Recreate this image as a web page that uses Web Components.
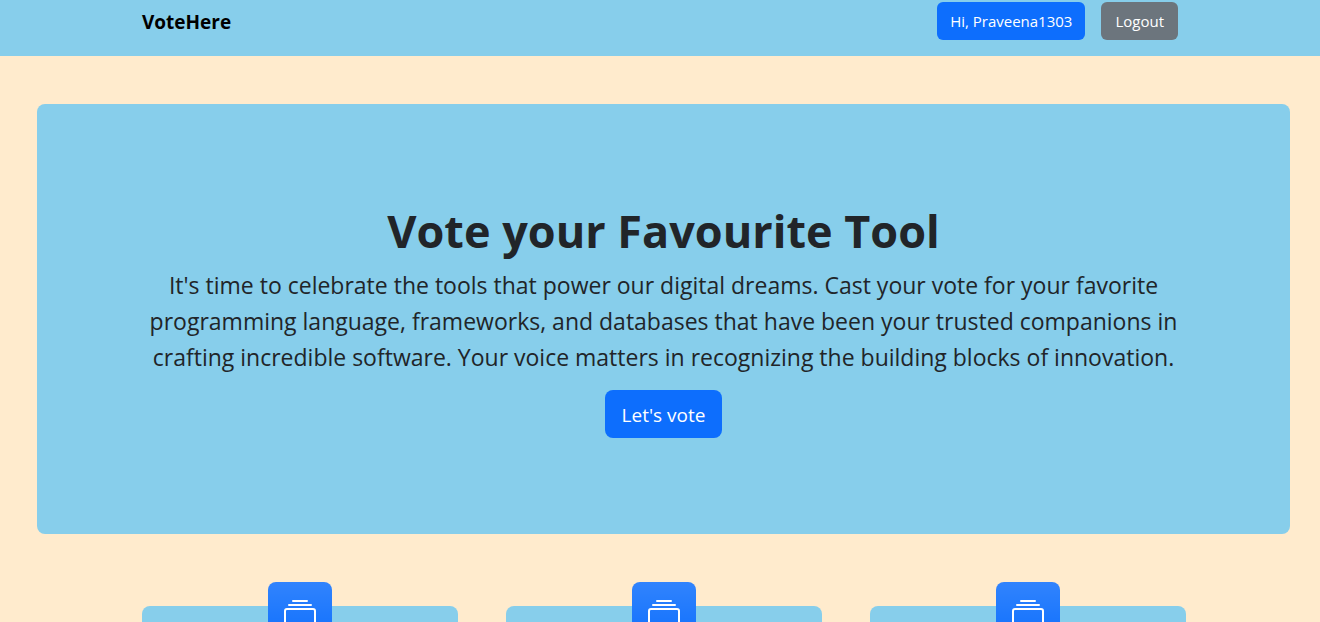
<!DOCTYPE html>
<html lang="en">
<head>
<meta charset="utf-8">
<meta name="viewport" content="width=device-width, initial-scale=1">
<title>VoteHere</title>
<style>
  body {
    margin: 0; background: #ffebcd; color: #212529;
    font-family: "Segoe UI", "Open Sans", "Noto Sans", sans-serif; font-size: 16px; line-height: 24px;
  }
</style>
</head>
<body>
<vote-page></vote-page>

<template id="page-template">
  <style>
    :host { display: flex; flex-direction: column; height: 100vh; overflow: hidden; }
    vote-nav { flex: none; }
    main { flex: 1; min-height: 0; display: flex; flex-direction: column; }
    vote-hero { flex: none; }
    .scroller { flex: 1; min-height: 0; margin-top: 48px; overflow: hidden; }
    .cards {
      display: grid; grid-template-columns: repeat(3, 1fr); gap: 48px;
      max-width: 1044px; margin: 0 auto; padding: 24px 48px 0 56px;
    }
  </style>
  <vote-nav user="Praveena1303"><span>VoteHere</span></vote-nav>
  <main>
    <vote-hero>
      <span slot="title">Vote your Favourite Tool</span>
      It's time to celebrate the tools that power our digital dreams. Cast your vote for your favorite programming language, frameworks, and databases that have been your trusted companions in crafting incredible software. Your voice matters in recognizing the building blocks of innovation.
      <span slot="action">Let's vote</span>
    </vote-hero>
    <section class="scroller">
      <div class="cards">
        <feature-card></feature-card>
        <feature-card></feature-card>
        <feature-card></feature-card>
      </div>
    </section>
  </main>
</template>

<template id="nav-template">
  <style>
    :host { display: block; background: #87ceeb; }
    nav {
      display: flex; align-items: flex-start; justify-content: space-between;
      max-width: 1036px; margin: 0 auto; padding: 2px 56px 14px;
    }
    a { color: #000; text-decoration: none; font-size: 19px; font-weight: 700; line-height: 40px; }
    .actions { display: flex; gap: 16px; }
  </style>
  <nav>
    <a href="#"><slot></slot></a>
    <div class="actions">
      <vote-button><span id="user"></span></vote-button>
      <vote-button kind="secondary">Logout</vote-button>
    </div>
  </nav>
</template>

<template id="button-template">
  <style>
    :host { display: inline-flex; }
    button {
      font: inherit; font-size: 15px; line-height: 24px; color: #fff; background: #0d6efd;
      border: 1px solid transparent; border-radius: 6px; padding: 6px 12px; cursor: pointer; white-space: nowrap;
    }
    :host([kind="secondary"]) button { background: #6c757d; padding: 6px 13px; }
    :host([size="lg"]) button { font-size: 19px; line-height: 30px; padding: 9px 16px 7px; border-radius: 8px; }
  </style>
  <button type="button"><slot></slot></button>
</template>

<template id="hero-template">
  <style>
    :host {
      display: block; margin: 48px 30px 0 37px; padding: 96px 48px;
      border-radius: 8px; background: #87ceeb; text-align: center;
    }
    h1 { margin: 0 0 6px; font-size: 45px; line-height: 61px; font-weight: 700; }
    p { max-width: 1044px; margin: 0 auto 15px; font-size: 23px; line-height: 36px; font-weight: 370; }
    vote-button { vertical-align: top; }
  </style>
  <h1><slot name="title"></slot></h1>
  <p><slot></slot></p>
  <vote-button size="lg"><slot name="action"></slot></vote-button>
</template>

<template id="card-template">
  <style>
    :host { display: block; min-height: 200px; border-radius: 8px; background: #87ceeb; }
    .badge {
      display: flex; align-items: center; justify-content: center; box-sizing: border-box;
      width: 64px; height: 64px; margin: -24px auto 0; padding-top: 2px; border-radius: 8px; color: #fff;
      background: #0d6efd linear-gradient(180deg, rgba(255,255,255,.15), rgba(255,255,255,0));
    }
  </style>
  <div class="badge">
    <svg width="32" height="32" viewBox="0 0 16 16" fill="currentColor" aria-hidden="true">
      <path d="M2.5 3.5a.5.5 0 0 1 0-1h11a.5.5 0 0 1 0 1h-11zm2-2a.5.5 0 0 1 0-1h7a.5.5 0 0 1 0 1h-7zM0 13a1.5 1.5 0 0 0 1.5 1.5h13A1.5 1.5 0 0 0 16 13V6a1.5 1.5 0 0 0-1.5-1.5h-13A1.5 1.5 0 0 0 0 6v7zm1.5.5A.5.5 0 0 1 1 13V6a.5.5 0 0 1 .5-.5h13a.5.5 0 0 1 .5.5v7a.5.5 0 0 1-.5.5h-13z"/>
    </svg>
  </div>
</template>

<script>
  class TemplateElement extends HTMLElement {
    constructor() {
      super();
      const template = document.getElementById(this.constructor.template);
      this.attachShadow({ mode: "open" }).append(template.content.cloneNode(true));
    }
  }
  class VoteButton extends TemplateElement { static template = "button-template"; }
  class VoteNav extends TemplateElement {
    static template = "nav-template";
    connectedCallback() {
      this.shadowRoot.getElementById("user").textContent = `Hi, ${this.getAttribute("user")}`;
    }
  }
  class VoteHero extends TemplateElement { static template = "hero-template"; }
  class FeatureCard extends TemplateElement { static template = "card-template"; }
  class VotePage extends TemplateElement { static template = "page-template"; }

  customElements.define("vote-button", VoteButton);
  customElements.define("vote-nav", VoteNav);
  customElements.define("vote-hero", VoteHero);
  customElements.define("feature-card", FeatureCard);
  customElements.define("vote-page", VotePage);
</script>
</body>
</html>
